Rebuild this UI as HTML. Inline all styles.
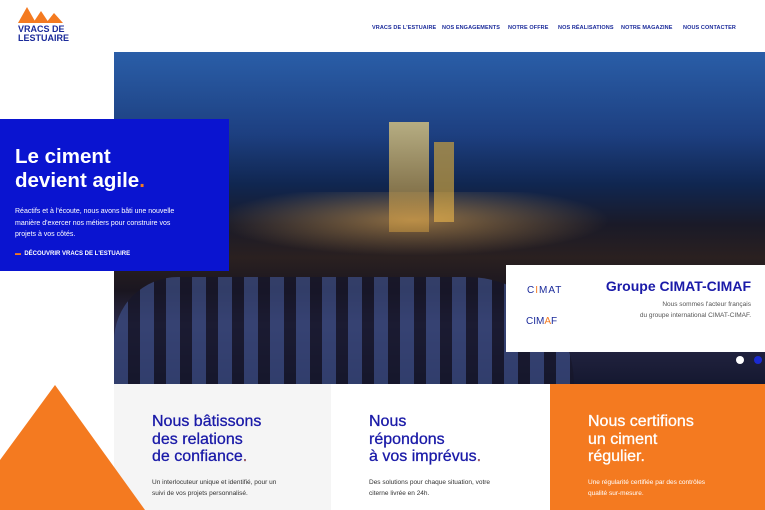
<!DOCTYPE html>
<html><head><meta charset="utf-8"><style>
*{margin:0;padding:0;box-sizing:border-box}
body{width:765px;height:510px;overflow:hidden;background:#fff;font-family:"Liberation Sans",sans-serif;position:relative}
.nav{position:absolute;top:25px;font-size:5.5px;color:#1a2a9a;font-weight:bold;letter-spacing:.1px}
.hero{position:absolute;left:114px;top:52px;width:651px;height:332px;overflow:hidden;
background:linear-gradient(180deg,#2a5ea8 0%,#1d3f80 25%,#102650 40%,#1a1a28 52%,#2a2020 62%,#1a1620 72%,#2a2a4a 82%,#151830 100%)}
.blue{position:absolute;left:0;top:119px;width:229px;height:152px;background:#0a14d0;color:#fff}
.card{position:absolute;left:506px;top:265px;width:259px;height:87px;background:#fff}
.b{position:absolute;top:384px;height:126px}
.b h3{position:absolute;left:38px;top:29px;font-size:16px;line-height:17.5px;font-weight:normal;color:#1a1aa8;-webkit-text-stroke:.3px #1a1aa8}
.b p{position:absolute;left:38px;top:93px;font-size:6.5px;line-height:11px;color:#333}
.o{color:#f47a20}
</style></head><body>
<svg style="position:absolute;left:18px;top:7px" width="48" height="17"><polygon points="0,16 9,0 18,16" fill="#f47a20"/><polygon points="15,16 23,4 31,16" fill="#f47a20"/><polygon points="28,16 36,6 45,16" fill="#f47a20"/></svg>
<div style="position:absolute;left:18px;top:25px;font-size:9px;line-height:9px;font-weight:bold;color:#1a2a9a">VRACS DE<br>LESTUAIRE</div>
<div class="nav" style="left:372px">VRACS DE L'ESTUAIRE</div>
<div class="nav" style="left:442px">NOS ENGAGEMENTS</div>
<div class="nav" style="left:508px">NOTRE OFFRE</div>
<div class="nav" style="left:558px">NOS RÉALISATIONS</div>
<div class="nav" style="left:621px">NOTRE MAGAZINE</div>
<div class="nav" style="left:683px">NOUS CONTACTER</div>
<div class="hero">
<div style="position:absolute;left:275px;top:70px;width:40px;height:110px;background:linear-gradient(#e8d080,#8a6a30);opacity:.75"></div>
<div style="position:absolute;left:320px;top:90px;width:20px;height:80px;background:#c8a040;opacity:.7"></div>
<div style="position:absolute;left:110px;top:140px;width:420px;height:70px;background:radial-gradient(ellipse at 45% 40%,rgba(255,190,90,.5),transparent 60%)"></div>
<div style="position:absolute;left:0;top:225px;width:460px;height:107px;background:repeating-linear-gradient(90deg,#3a4a80 0 14px,#16162a 14px 26px);border-radius:120px 200px 0 0;opacity:.75"></div>
<div style="position:absolute;left:622px;top:304px;width:8px;height:8px;border-radius:50%;background:#fff"></div>
<div style="position:absolute;left:640px;top:304px;width:8px;height:8px;border-radius:50%;background:#1a2ad0"></div>
</div>
<div class="blue">
<div style="position:absolute;left:15px;top:26px;font-size:20.5px;line-height:24px;font-weight:bold">Le ciment<br>devient agile<span class="o">.</span></div>
<div style="position:absolute;left:15px;top:87px;font-size:7px;line-height:11.5px">Réactifs et à l'écoute, nous avons bâti une nouvelle<br>manière d'exercer nos métiers pour construire vos<br>projets à vos côtés.</div>
<div style="position:absolute;left:15px;top:132px;font-size:6px;font-weight:bold"><span class="o">▬</span>&nbsp; DÉCOUVRIR VRACS DE L'ESTUAIRE</div>
</div>
<div class="card">
<div style="position:absolute;left:21px;top:20px;font-size:10px;color:#1a2a9a;letter-spacing:1px">C<span class="o">I</span>MAT</div>
<div style="position:absolute;left:20px;top:51px;font-size:10px;color:#1a2a9a">CIM<span class="o">A</span>F</div>
<div style="position:absolute;right:14px;top:13px;font-size:14px;font-weight:bold;color:#1a1aa8">Groupe CIMAT-CIMAF</div>
<div style="position:absolute;right:14px;top:34px;font-size:6.5px;line-height:11px;color:#555;text-align:right">Nous sommes l'acteur français<br>du groupe international CIMAT-CIMAF.</div>
</div>
<div class="b" style="left:114px;width:217px;background:#f5f5f5"><h3>Nous bâtissons<br>des relations<br>de confiance<span class="o">.</span></h3><p>Un interlocuteur unique et identifié, pour un<br>suivi de vos projets personnalisé.</p></div>
<div class="b" style="left:331px;width:219px;background:#fff"><h3>Nous<br>répondons<br>à vos imprévus<span class="o">.</span></h3><p>Des solutions pour chaque situation, votre<br>citerne livrée en 24h.</p></div>
<div class="b" style="left:550px;width:215px;background:#f47a20"><h3 style="color:#fff;-webkit-text-stroke:.3px #fff">Nous certifions<br>un ciment<br>régulier.</h3><p style="color:#fff">Une régularité certifiée par des contrôles<br>qualité sur-mesure.</p></div>
<svg style="position:absolute;left:0;top:385px;z-index:5" width="145" height="125"><polygon points="55,0 145,125 0,125 0,75" fill="#f47a20"/></svg>
</body></html>
